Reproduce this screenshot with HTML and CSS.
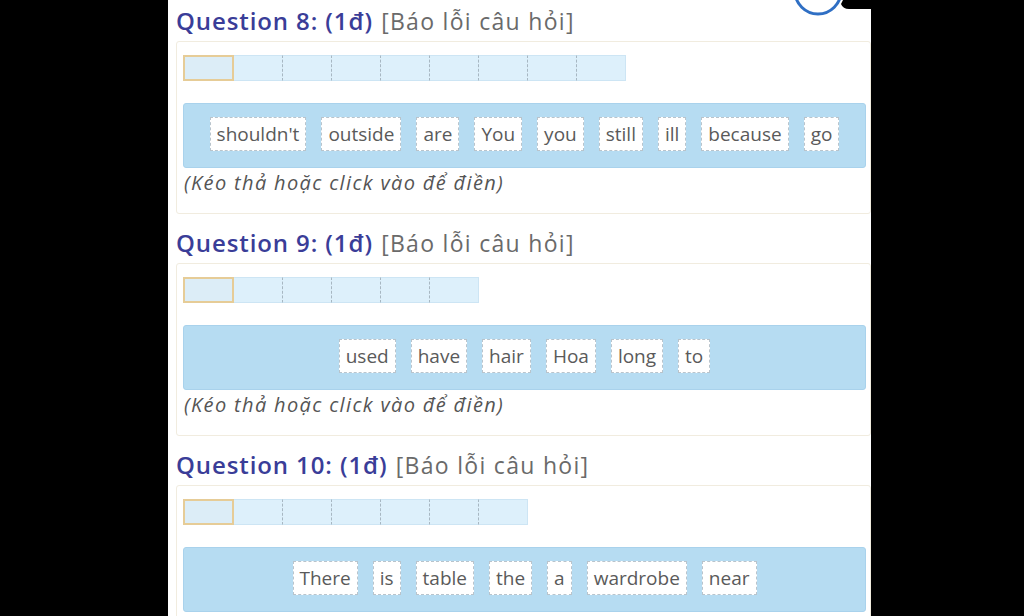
FILE: index.html
```html
<!DOCTYPE html>
<html lang="vi">
<head>
<meta charset="utf-8">
<title>Questions</title>
<link rel="stylesheet" href="styles.css">
</head>
<body>
<div class="panel">
  <svg class="corner" width="120" height="30" viewBox="0 0 120 30" aria-hidden="true">
    <circle cx="67" cy="-9" r="23" fill="none" stroke="#2f6fc4" stroke-width="3"/>
    <path d="M92 0 H120 V9 H98 Q92 9 90 4 Z" fill="#000"/>
  </svg>

  <section class="question">
    <h2 class="q-title"><span class="q-num">Question 8: (1đ)</span> <span class="q-report">[Báo lỗi câu hỏi]</span></h2>
    <div class="card">
      <div class="slots">
        <span class="slot active"></span><span class="slot"></span><span class="slot"></span><span class="slot"></span><span class="slot"></span><span class="slot"></span><span class="slot"></span><span class="slot"></span><span class="slot"></span>
      </div>
      <div class="bank">
        <span class="chip">shouldn't</span><span class="chip">outside</span><span class="chip">are</span><span class="chip">You</span><span class="chip">you</span><span class="chip">still</span><span class="chip">ill</span><span class="chip">because</span><span class="chip">go</span>
      </div>
      <p class="hint">(Kéo thả hoặc click vào để điền)</p>
    </div>
  </section>

  <section class="question">
    <h2 class="q-title"><span class="q-num">Question 9: (1đ)</span> <span class="q-report">[Báo lỗi câu hỏi]</span></h2>
    <div class="card">
      <div class="slots">
        <span class="slot active"></span><span class="slot"></span><span class="slot"></span><span class="slot"></span><span class="slot"></span><span class="slot"></span>
      </div>
      <div class="bank">
        <span class="chip">used</span><span class="chip">have</span><span class="chip">hair</span><span class="chip">Hoa</span><span class="chip">long</span><span class="chip">to</span>
      </div>
      <p class="hint">(Kéo thả hoặc click vào để điền)</p>
    </div>
  </section>

  <section class="question">
    <h2 class="q-title"><span class="q-num">Question 10: (1đ)</span> <span class="q-report">[Báo lỗi câu hỏi]</span></h2>
    <div class="card">
      <div class="slots">
        <span class="slot active"></span><span class="slot"></span><span class="slot"></span><span class="slot"></span><span class="slot"></span><span class="slot"></span><span class="slot"></span>
      </div>
      <div class="bank">
        <span class="chip">There</span><span class="chip">is</span><span class="chip">table</span><span class="chip">the</span><span class="chip">a</span><span class="chip">wardrobe</span><span class="chip">near</span>
      </div>
      <p class="hint">(Kéo thả hoặc click vào để điền)</p>
    </div>
  </section>
</div>
</body>
</html>
```

FILE: styles.css
```css
html, body {
  margin: 0;
  padding: 0;
  background: #000;
  height: 100%;
  overflow: hidden;
}

.panel {
  position: relative;
  margin-left: 168px;
  width: 703px;
  height: 616px;
  background: #fff;
  padding: 7px 0 0 8px;
  box-sizing: border-box;
  overflow: hidden;
  font-family: "Open Sans", "Noto Sans", sans-serif;
}

.corner {
  position: absolute;
  top: 0;
  right: 0;
}

.question {
  margin-bottom: 15px;
}

.q-title {
  margin: 0 0 6px 0;
  font-size: 24px;
  line-height: 28px;
  font-weight: normal;
  white-space: nowrap;
  letter-spacing: 0.9px;
}

.q-num {
  color: #3a3d98;
  font-weight: 600;
}

.q-report {
  color: #6a6a6a;
  font-size: 23px;
  letter-spacing: 1.3px;
  margin-left: 1px;
}

.card {
  border: 1px solid #f1ecdf;
  border-radius: 3px;
  padding: 13px 4px 17px 6px;
  background: #fff;
}

.slots {
  display: flex;
  height: 26px;
}

.slot {
  width: 49px;
  height: 26px;
  box-sizing: border-box;
  background: #ddf0fb;
  border-top: 1px solid #cde5f4;
  border-bottom: 1px solid #cde5f4;
  border-right: 1px dashed #a7b7c2;
}

.slot:last-child {
  border-right: 1px solid #cde5f4;
}

.slot.active {
  width: 51px;
  border: 2px solid #e6cc97;
  background: #dcedf7;
}

.bank {
  margin-top: 22px;
  height: 65px;
  box-sizing: border-box;
  background: #b6dcf2;
  border: 1px solid #a9d2ec;
  border-radius: 3px;
  display: flex;
  align-items: center;
  justify-content: center;
  gap: 15px;
  padding-bottom: 3px;
}

.chip {
  display: flex;
  align-items: center;
  height: 34px;
  box-sizing: border-box;
  padding: 0 6px;
  background: #fff;
  border: 1px dashed #b9c4cc;
  color: #5a5a5a;
  font-size: 19px;
}

.hint {
  margin: 2px 0 0 1px;
  font-size: 20px;
  line-height: 26px;
  font-style: italic;
  color: #555;
  letter-spacing: 1.35px;
}
```
